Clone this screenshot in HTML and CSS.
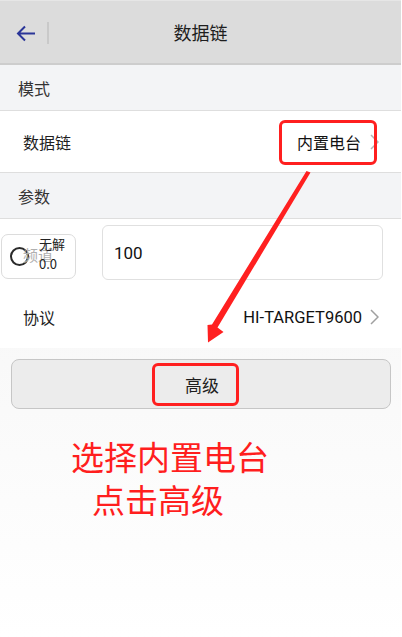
FILE: index.html
```html
<!DOCTYPE html>
<html lang="zh-CN">
<head>
    <meta charset="UTF-8">
    <meta name="viewport" content="width=device-width, initial-scale=1.0">
    <title>数据链</title>
    <link rel="stylesheet" href="styles.css">
</head>
<body>
    <div class="page">
        <div class="topbar">
            <span class="back">
                <svg width="20" height="17" viewBox="0 0 20 17">
                    <path d="M19 8.5H2M9 1.5L2 8.5L9 15.5" fill="none" stroke="#2a3598" stroke-width="2"/>
                </svg>
            </span>
            <span class="divider"></span>
            <h1 class="title">数据链</h1>
        </div>

        <div class="section">模式</div>
        <div class="row">
            <span class="label">数据链</span>
            <span class="value">内置电台
                <svg class="chev" width="9" height="16" viewBox="0 0 9 16"><path d="M1 1L8 8L1 15" fill="none" stroke="#b5b5b5" stroke-width="1.5"/></svg>
            </span>
        </div>

        <div class="section">参数</div>
        <div class="params">
            <div class="channel-row">
                <div class="channel">
                    <span class="radio"></span>
                    <span class="channel-bg">频道</span>
                    <span class="channel-info">无解<br>0.0</span>
                </div>
                <div class="input">100</div>
            </div>
            <div class="proto-row">
                <span class="label">协议</span>
                <span class="value latin">HI-TARGET9600
                    <svg class="chev" width="9" height="16" viewBox="0 0 9 16"><path d="M1 1L8 8L1 15" fill="none" stroke="#a0a0a0" stroke-width="1.5"/></svg>
                </span>
            </div>
        </div>

        <div class="actions">
            <button class="advanced">高级</button>
        </div>

        <div class="note">
            <p class="note-1">选择内置电台</p>
            <p class="note-2">点击高级</p>
        </div>

        <!-- annotations -->
        <div class="mark mark-radio"></div>
        <div class="mark mark-adv"></div>
        <svg class="arrow" width="402" height="637" viewBox="0 0 402 637">
            <polygon points="306.5,171 310.5,172.5 217.5,327.5 223.5,332 208,342.5 207.5,325 212,324.5" fill="#ff2020"/>
        </svg>
    </div>
</body>
</html>
```

FILE: styles.css
```css
body {
    margin: 0;
    padding: 0;
    background: #ffffff;
    font-family: Roboto, "Noto Sans CJK SC", sans-serif;
    color: #222222;
}
.page {
    position: relative;
    width: 401px;
    height: 637px;
    display: flex;
    flex-direction: column;
    background: linear-gradient(#f1f1f1, #ffffff);
    overflow: hidden;
}
.topbar {
    height: 62px;
    border-top: 1px solid #e6e6e6;
    border-bottom: 2px solid #cdcdcd;
    background: #dcdcdc;
    display: flex;
    align-items: center;
    position: relative;
}
.back {
    width: 47px;
    padding-left: 16px;
    box-sizing: border-box;
    display: flex;
    align-items: center;
    margin-top: 2px;
}
.divider {
    width: 2px;
    height: 22px;
    background: #c9c9c9;
    margin-top: 1px;
}
.title {
    position: absolute;
    left: 0;
    right: 0;
    margin: 0;
    text-align: center;
    font-size: 18px;
    font-weight: normal;
    color: #1e1e1e;
    font-family: "Noto Sans CJK SC", sans-serif;
    pointer-events: none;
}
.section {
    height: 45px;
    border-bottom: 1px solid #dedede;
    background: #f3f4f6;
    padding-left: 18px;
    display: flex;
    align-items: center;
    font-size: 16px;
    color: #333333;
    font-family: "Noto Sans CJK SC", sans-serif;
}
.row {
    height: 61px;
    border-bottom: 1px solid #dedede;
    background: #ffffff;
    display: flex;
    align-items: center;
    justify-content: space-between;
    padding: 0 23px;
}
.label {
    font-size: 16px;
    color: #1e1e1e;
    font-family: "Noto Sans CJK SC", sans-serif;
}
.value {
    display: flex;
    align-items: center;
    gap: 9px;
    font-size: 16px;
    color: #111111;
    font-family: "Noto Sans CJK SC", sans-serif;
    margin-right: -1px;
}
.value.latin {
    font-family: Roboto, sans-serif;
    font-size: 16.5px;
    gap: 8px;
}
.chev {
    display: block;
}
.params {
    background: #ffffff;
    height: 129px;
    display: flex;
    flex-direction: column;
}
.channel-row {
    display: flex;
    align-items: center;
    padding: 6px 18px 0 1px;
    gap: 26px;
}
.channel {
    position: relative;
    width: 73px;
    height: 43px;
    border: 1px solid #dcdcdc;
    border-radius: 7px;
    margin-top: 8px;
}
.radio {
    position: absolute;
    left: 8px;
    top: 12px;
    width: 15px;
    height: 15px;
    border: 2px solid #2a2a2a;
    border-radius: 50%;
}
.channel-bg {
    position: absolute;
    left: 21px;
    top: 11px;
    font-size: 15px;
    line-height: 18px;
    color: #b0b0b0;
    font-family: "Noto Sans CJK SC", sans-serif;
}
.channel-info {
    position: absolute;
    left: 37px;
    top: -1px;
    font-size: 13px;
    line-height: 20px;
    color: #222222;
    font-family: "Noto Sans CJK SC", sans-serif;
}
.input {
    flex: 1;
    height: 53px;
    border: 1px solid #e0e0e0;
    border-radius: 6px;
    display: flex;
    align-items: center;
    padding-left: 11px;
    font-size: 17px;
    color: #111111;
}
.proto-row {
    flex: 1;
    display: flex;
    align-items: center;
    justify-content: space-between;
    padding: 6px 23px 0 23px;
}
.actions {
    padding: 11px 11px 0 11px;
}
.advanced {
    width: 380px;
    height: 50px;
    border: 1px solid #c6c6c6;
    border-radius: 8px;
    background: #ececec;
    font-size: 17px;
    color: #1e1e1e;
    font-family: "Noto Sans CJK SC", sans-serif;
    padding: 0;
    padding-left: 2px;
}
.note {
    padding-top: 26px;
    font-family: "Noto Sans CJK SC", sans-serif;
    font-size: 33px;
    line-height: 43px;
    color: #ff1e1e;
}
.note p {
    margin: 0;
}
.note-1 {
    padding-left: 71px;
}
.note-2 {
    padding-left: 92px;
}
.mark {
    position: absolute;
    border: 3px solid #ff1f1f;
    border-radius: 6px;
    box-sizing: border-box;
}
.mark-radio {
    left: 279px;
    top: 120px;
    width: 98px;
    height: 45px;
}
.mark-adv {
    left: 152px;
    top: 363px;
    width: 87px;
    height: 43px;
}
.arrow {
    position: absolute;
    left: 0;
    top: 0;
    pointer-events: none;
}
```
